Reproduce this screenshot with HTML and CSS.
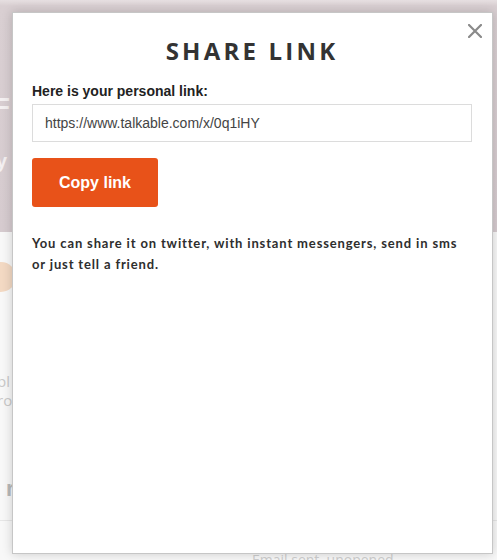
FILE: index.html
```html
<!DOCTYPE html>
<html>
<head>
<meta charset="utf-8">
<link rel="stylesheet" href="styles.css">
</head>
<body>
<div class="page">
  <div class="hero">
    <span class="hero-f">F</span>
    <span class="hero-y">y</span>
  </div>
  <div class="content">
    <div class="avatar"></div>
    <div class="faint-text">
      <div>bl</div>
      <div>ro</div>
    </div>
    <div class="faint-r">r</div>
    <div class="rule"></div>
    <div class="email-state">Email sent, unopened</div>
  </div>
</div>

<div class="modal">
  <button class="close" aria-label="Close">
    <svg width="14" height="14" viewBox="0 0 14 14"><path d="M1 1 L13 13 M13 1 L1 13" stroke="#8a8a8a" stroke-width="2.2" stroke-linecap="square"/></svg>
  </button>
  <h1 class="title">SHARE LINK</h1>
  <label class="label">Here is your personal link:</label>
  <div class="link-input">https://www.talkable.com/x/0q1iHY</div>
  <button class="copy">Copy link</button>
  <p class="note">You can share it on twitter, with instant messengers, send in sms or just tell a friend.</p>
</div>
</body>
</html>
```
FILE: styles.css
```css
html, body {
  margin: 0;
  padding: 0;
}
body {
  width: 497px;
  height: 560px;
  overflow: hidden;
  background: #f7f7f7;
  font-family: "Liberation Sans", Arial, sans-serif;
  position: relative;
}
.page {
  display: flex;
  flex-direction: column;
  height: 560px;
}
.hero {
  height: 232px;
  background: linear-gradient(180deg, #e6dfe1 0px, #d9cfd2 6px, #d6cbcf 100%);
  position: relative;
  color: #f4f0f1;
  font-weight: bold;
  font-size: 26px;
}
.hero-f {
  position: absolute;
  left: -6px;
  top: 92px;
}
.hero-y {
  position: absolute;
  left: -4px;
  top: 150px;
  font-size: 20px;
}
.content {
  flex: 1;
  position: relative;
  background: #f8f8f8;
  color: #c9c9c9;
}
.avatar {
  position: absolute;
  left: -14px;
  top: 30px;
  width: 30px;
  height: 30px;
  border-radius: 50%;
  background: #f3d9c3;
}
.faint-text {
  position: absolute;
  left: -3px;
  top: 140px;
  font-size: 15px;
  line-height: 19px;
  font-family: "Open Sans", sans-serif;
}
.faint-r {
  position: absolute;
  left: 6px;
  top: 244px;
  font-size: 22px;
  font-weight: bold;
  color: #b8b8b8;
}
.rule {
  position: absolute;
  left: 0;
  right: 0;
  top: 288px;
  height: 1px;
  background: #e6e6e6;
}
.email-state {
  position: absolute;
  left: 252px;
  top: 318px;
  font-size: 14px;
  color: #cfcfcf;
  font-family: "Open Sans", sans-serif;
}
.modal {
  position: absolute;
  left: 12px;
  top: 12px;
  width: 481px;
  height: 542px;
  background: #fff;
  border: 1px solid #c6c6c6;
  box-shadow: 0 0 10px rgba(0,0,0,0.18);
  padding: 0 20px 0 19px;
  box-sizing: border-box;
}
.close {
  position: absolute;
  right: 10px;
  top: 11px;
  border: 0;
  background: none;
  padding: 0;
  width: 14px;
  height: 14px;
  display: block;
}
.close svg { display: block; }
.title {
  margin: 23px 0 0;
  text-align: center;
  font-family: "Open Sans", sans-serif;
  font-weight: 700;
  font-size: 24px;
  line-height: 30px;
  letter-spacing: 3.2px;
  color: #333;
}
.label {
  display: block;
  margin-top: 17px;
  font-weight: bold;
  font-size: 14px;
  line-height: 17px;
  color: #222;
}
.link-input {
  margin-top: 4px;
  height: 38px;
  box-sizing: border-box;
  border: 1px solid #dcdcdc;
  padding: 0 12px;
  display: flex;
  align-items: center;
  font-size: 14px;
  color: #444;
  width: 440px;
}
.copy {
  margin-top: 16px;
  width: 126px;
  height: 49px;
  border: 0;
  border-radius: 3px;
  background: #e85219;
  color: #fff;
  font-family: "Liberation Sans", Arial, sans-serif;
  font-weight: bold;
  font-size: 16px;
  display: block;
}
.note {
  margin: 26px 0 0;
  font-family: Lato, sans-serif;
  font-weight: 700;
  font-size: 13px;
  line-height: 21px;
  letter-spacing: 0.85px;
  color: #2e2e2e;
}
```
